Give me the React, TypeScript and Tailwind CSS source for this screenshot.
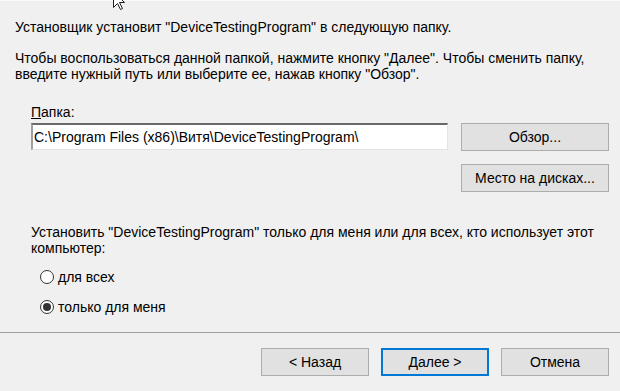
import React from 'react';

function Btn({ children, primary }: { children: React.ReactNode; primary?: boolean }) {
  return (
    <button
      className={
        primary
          ? 'h-[28px] w-[108px] bg-[#e1e1e1] border-2 border-[#0078d7] text-black'
          : 'h-[28px] w-[108px] bg-[#e1e1e1] border border-[#adadad] text-black'
      }
    >
      {children}
    </button>
  );
}

function Radio({ checked, label }: { checked?: boolean; label: string }) {
  return (
    <div className="flex items-center h-[16px]">
      <span className="w-[14px] h-[14px] rounded-full border border-[#333333] bg-white flex items-center justify-center">
        {checked && <span className="w-[8px] h-[8px] rounded-full bg-[#333333]"></span>}
      </span>
      <span className="ml-[4px]">{label}</span>
    </div>
  );
}

export default function App() {
  return (
    <div
      className="relative w-[620px] h-[391px] overflow-hidden bg-[#f0f0f0] text-black text-[14px] leading-[16px]"
      style={{ fontFamily: '"Liberation Sans", Arial, sans-serif' }}
    >
      {/* mouse pointer, cut off at the top */}
      <svg className="absolute left-[113px] top-[-9px]" width="14" height="20" viewBox="0 0 14 20">
        <path d="M0.5 0.5 L0.5 16.5 L4.5 12.5 L7.5 18.5 L9.5 17.5 L6.5 11.5 L11.5 11.5 Z" fill="white" stroke="#222" strokeWidth="1" />
      </svg>

      <div className="h-[1px] bg-[#fafafa]"></div>

      {/* intro text */}
      <div className="px-[15px] pt-[18px]">
        <p>Установщик установит "DeviceTestingProgram" в следующую папку.</p>
        <p className="mt-[15px]">
          Чтобы воспользоваться данной папкой, нажмите кнопку "Далее". Чтобы сменить папку,
          <br />
          введите нужный путь или выберите ее, нажав кнопку "Обзор".
        </p>
      </div>

      {/* folder */}
      <div className="grid grid-cols-[417px_148px] gap-x-[13px] pl-[31px] mt-[22px]">
        <div className="col-span-2 mb-[3px]">
          <span className="underline">П</span>апка:
        </div>
        <div className="h-[27px] bg-white border-t-2 border-l-2 border-t-[#696969] border-l-[#a0a0a0] border-b border-r border-b-[#e3e3e3] border-r-[#e3e3e3] pl-[1px] flex items-center">
          C:\Program Files (x86)\Витя\DeviceTestingProgram\
        </div>
        <button className="h-[28px] bg-[#e1e1e1] border border-[#adadad]">Обзор...</button>
        <div></div>
        <button className="h-[28px] mt-[13px] bg-[#e1e1e1] border border-[#adadad]">Место на дисках...</button>
      </div>

      {/* install for */}
      <div className="pl-[31px] mt-[32px]">
        <p>
          Установить "DeviceTestingProgram" только для меня или для всех, кто использует этот
          <br />
          компьютер:
        </p>
        <div className="pl-[9px] mt-[13px] flex flex-col gap-[14px]">
          <Radio label="для всех" />
          <Radio checked label="только для меня" />
        </div>
      </div>

      {/* separator + navigation */}
      <div className="mt-[17px] border-t border-[#a0a0a0]"></div>
      <div className="flex justify-end gap-[12px] pr-[11px] mt-[15px]">
        <Btn>&lt; Назад</Btn>
        <Btn primary>Далее &gt;</Btn>
        <Btn>Отмена</Btn>
      </div>
    </div>
  );
}
